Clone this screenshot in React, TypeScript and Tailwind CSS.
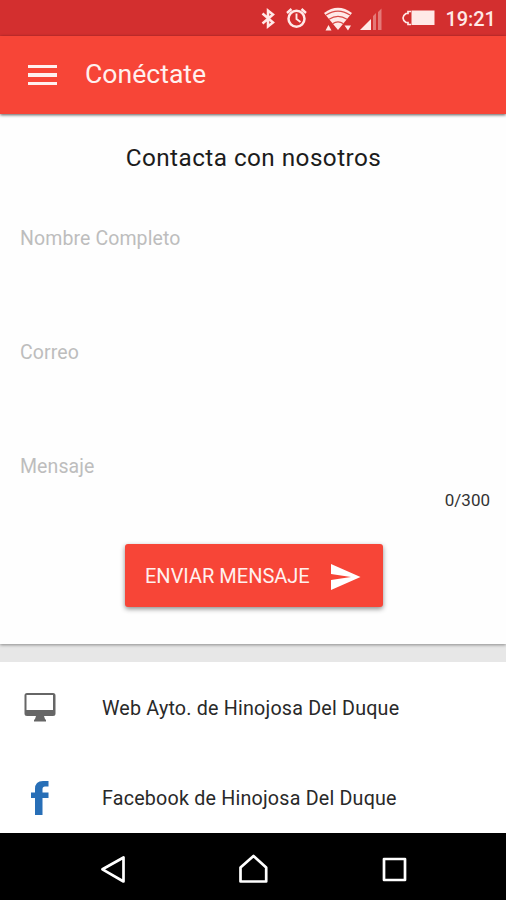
import React from "react";

function StatusBar() {
  return (
    <div className="flex h-9 items-center bg-[#d32f2f] pl-[260px] text-[#ffe9e7]">
      <svg width="175" height="36" viewBox="260 0 175 36" fill="none" stroke="currentColor">
        <path d="M262.500 13.500l10.500 9-5 4v-16l5 4-10.500 9" strokeWidth="2.500" />
        <circle cx="296.500" cy="18.800" r="8" strokeWidth="2.500" />
        <path d="M287 13l4.500-4M306 13l-4.500-4" strokeWidth="2.400" />
        <path d="M296.500 13.500v5.500l4 3" strokeWidth="1.900" />
        <path d="M324 13Q338 2.500 352 13L338 30z" fill="currentColor" stroke="none" />
        <path d="M326 15q12-7.800 24 0M329 19.300q9-5.800 18 0M332.500 23.700q5.500-3.500 11 0" stroke="#d84a46" strokeWidth="1.200" />
        <path d="M325.500 30.500l3-5.500 3 5.500zM344.500 25.500h6.500l-3 5z" fill="currentColor" stroke="none" />
        <path d="M360 30l11-11v11z" fill="currentColor" stroke="none" />
        <path d="M373 16l3-3v17h-3zM378 12l3.500-3.500V30H378z" fill="currentColor" stroke="none" opacity=".4" />
        <path d="M411 11.500h-3v2h-2q-3 2-3 4.500t3 4.500h2v2h3" strokeWidth="1.700" />
        <path d="M411.500 10.500h23v14.500h-23z" fill="currentColor" stroke="none" />
      </svg>
      <span className="ml-[10.500px] pt-[2px] text-[20px] font-medium leading-9 tracking-[-.1px]">19:21</span>
    </div>
  );
}

function Header() {
  return (
    <header className="relative flex h-[78px] items-center bg-[#f74537] pb-px pl-[28px] text-[#fff0ee] shadow-[0_1px_3px_rgba(0,0,0,.65)]">
      <div className="flex w-[29px] flex-col gap-[5px] pt-px">
        <span className="h-[3.500px] bg-current" />
        <span className="h-[3.500px] bg-current" />
        <span className="h-[3.500px] bg-current" />
      </div>
      <h1 className="ml-[28px] text-[26.600px] leading-none">Conéctate</h1>
    </header>
  );
}

function Field({ label }: { label: string }) {
  return <div className="h-[114px] pl-5 text-[19.500px] leading-[30px] tracking-[.1px] text-[#bdbdbd]">{label}</div>;
}

export default function App() {
  return (
    <div className="flex h-[900px] w-[506px] flex-col overflow-hidden bg-[#e7e7e7] font-[Roboto,'Liberation_Sans',sans-serif]">
      <StatusBar />
      <Header />
      <main className="h-[530px] bg-[#fefefe] pt-[26px] shadow-[0_1px_3px_rgba(0,0,0,.4)]">
        <h2 className="pl-px text-center text-[24.300px] leading-[36px] tracking-[.45px] text-[#1c1c1c]">Contacta con nosotros</h2>
        <div className="h-[48px]" />
        <Field label="Nombre Completo" />
        <Field label="Correo" />
        <div className="h-[33px] pl-5 text-[19.500px] leading-[30px] tracking-[.1px] text-[#bdbdbd]">Mensaje</div>
        <div className="h-[59px] pr-4 text-right text-[17px] leading-[30px] text-[#333]">0/300</div>
        <button className="ml-[125px] flex h-[63px] w-[258px] items-center rounded-[3px] bg-[#f74537] pl-[20px] text-[#fff0ee] shadow-[0_2px_5px_rgba(0,0,0,.45)]">
          <span className="w-[186px] text-left text-[20px] leading-none">ENVIAR MENSAJE</span>
          <svg className="mt-[2px]" width="30" height="26" viewBox="0 0 30 26" fill="#fff">
            <path d="M0 0l29.500 13L0 26V16l20-3L0 10z" />
          </svg>
        </button>
      </main>
      <section className="mt-[18px] h-[171px] bg-white text-[19.700px] tracking-[.2px] text-[#292929]">
        <div className="flex h-[90px] items-center pl-[24px]">
          <svg width="32" height="29" viewBox="0 0 32 29" fill="#666">
            <path fillRule="evenodd" d="M3 0h26q2.500 0 2.500 2.500v18q0 2.500-2.500 2.500h-9l1 3 1 1v1.500H10V27l1-1 1-3H3Q.5 23 .5 20.500v-18Q.5 0 3 0zM2.500 2v15h26.500V2z" />
          </svg>
          <span className="ml-[46px] pt-[4px] leading-[30px]">Web Ayto. de Hinojosa Del Duque</span>
        </div>
        <div className="flex h-[90px] items-center pl-[31px]">
          <svg className="mt-px" width="18" height="34" viewBox="0 0 18 34" fill="#286fb7">
            <path d="M4 34V17H0v-5.500h4V8q0-8 8-8h5.500v5.500H14q-2.500 0-2.500 2.500v3.500h6V17h-6v17z" />
          </svg>
          <span className="ml-[53px] pt-[4px] leading-[30px]">Facebook de Hinojosa Del Duque</span>
        </div>
      </section>
      <nav className="relative h-[67px] shrink-0 bg-black">
        <svg width="506" height="67" viewBox="0 833 506 67" fill="none" stroke="#fff" strokeWidth="2.700">
          <path d="M123.500 857.500v24l-21-12.200zM253.500 856l12.700 11.500v14H240.500v-14zM384 859h21v21h-21z" strokeLinejoin="round" />
        </svg>
      </nav>
    </div>
  );
}
